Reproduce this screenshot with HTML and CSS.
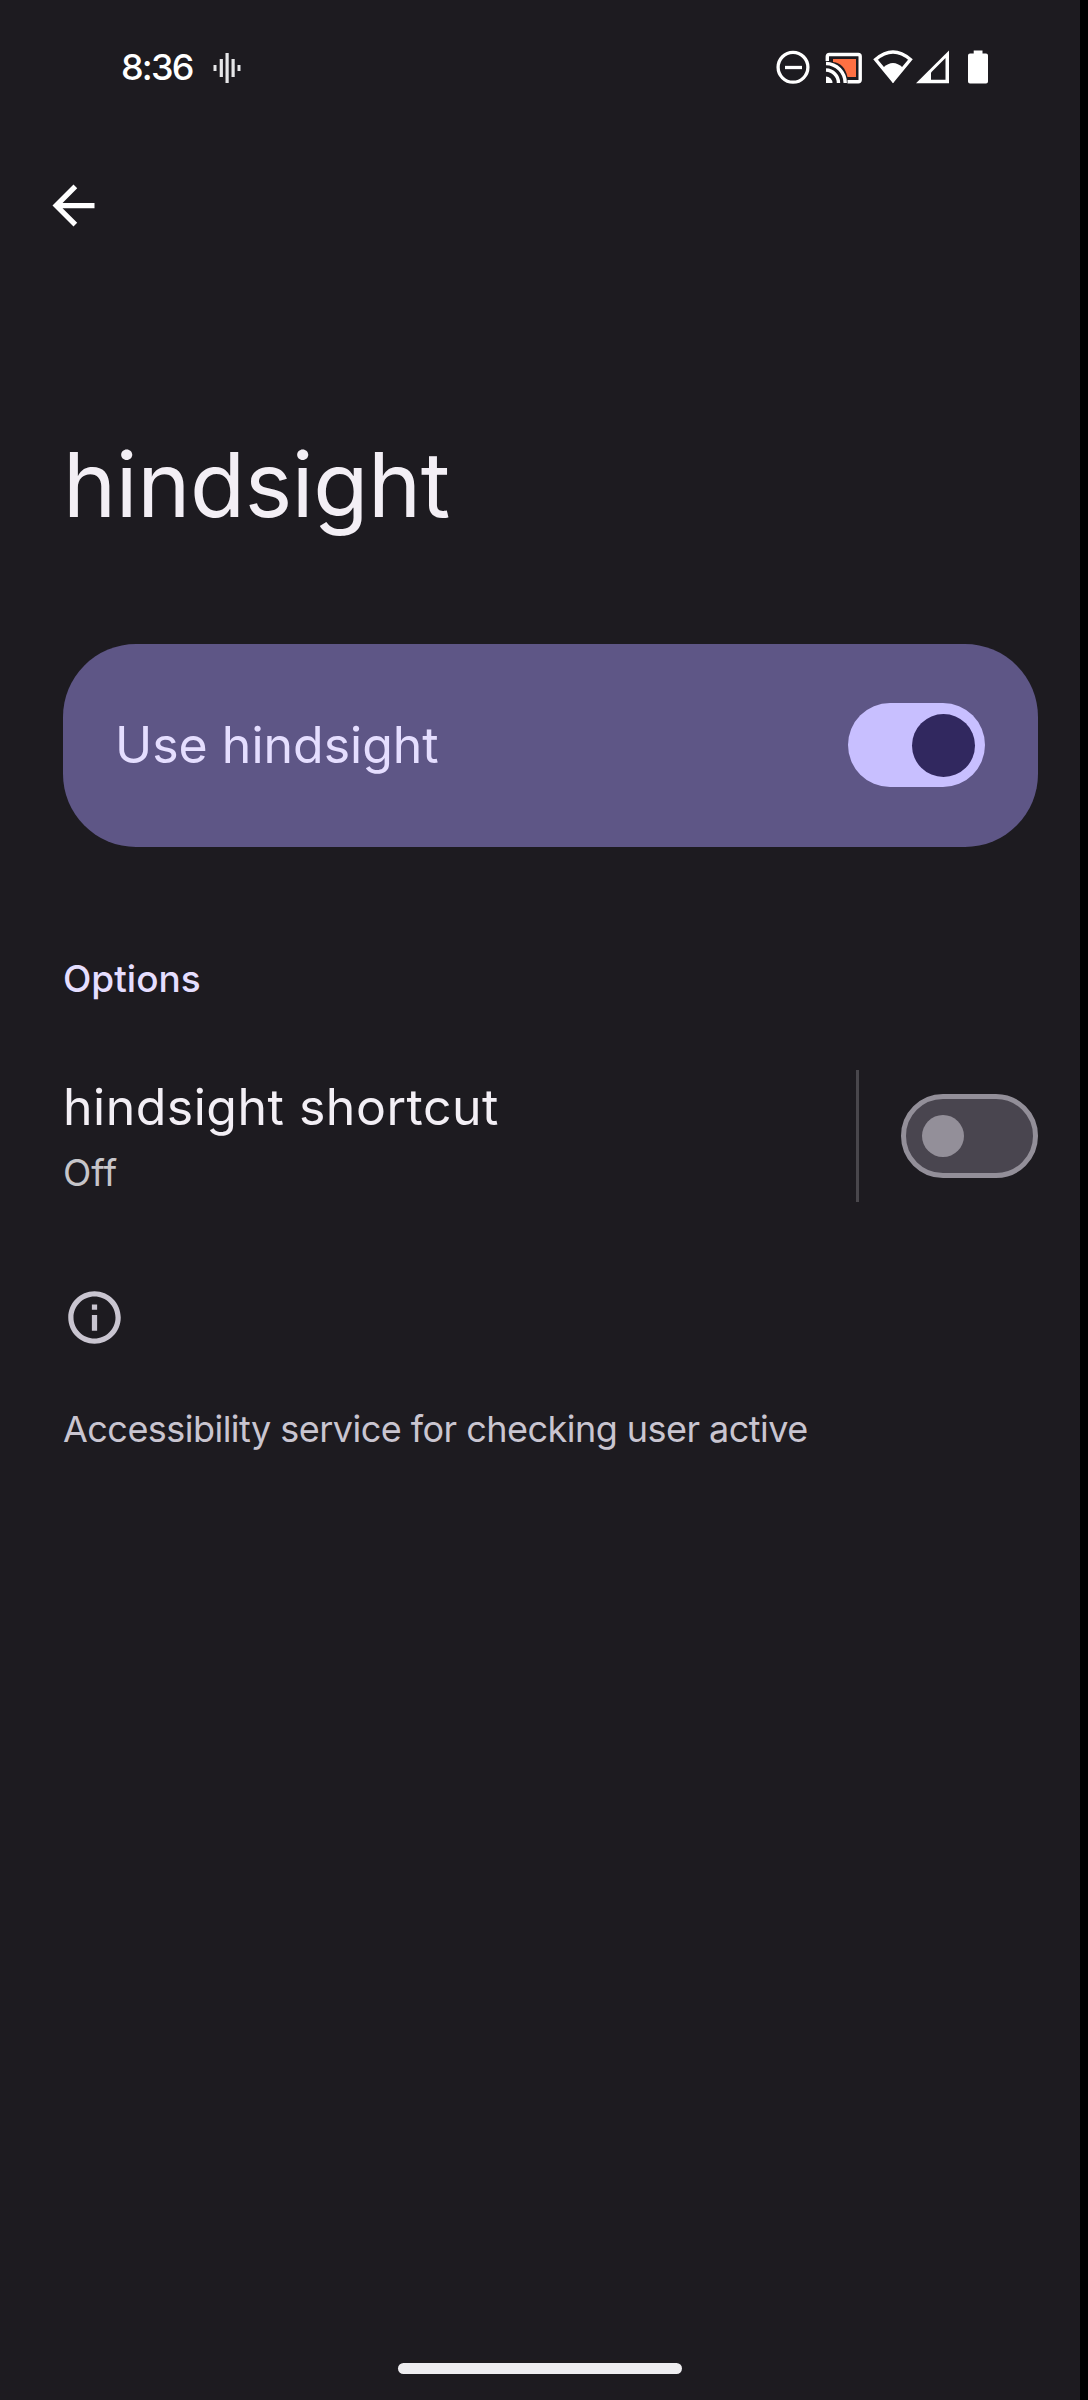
FILE: index.html
```html
<!DOCTYPE html>
<html lang="en">
<head>
<meta charset="utf-8">
<title>hindsight</title>
<link rel="stylesheet" href="styles.css">
</head>
<body>
<div class="screen">
  <header class="status">
    <div class="status-left">
      <span class="clock">8:36</span>
      <svg class="wave" width="28" height="34" viewBox="0 0 28 34" fill="#e6e6e8"><path d="M.5 15h3v6h-3zM6.700 9h3.200v18H6.700zM12.500 3h3.200v30h-3.200zM18.500 9h3.200v18h-3.200zM24.500 15h3v6h-3z"/></svg>
    </div>
    <div class="status-right">
      <svg width="34" height="34" viewBox="0 0 34 34" fill="none" stroke="#fff" stroke-width="3.300"><circle cx="17" cy="17.300" r="14.900"/><path d="M9 17.500h17"/></svg>
      <svg class="cast" width="38" height="34" viewBox="0 0 38 34" fill="none"><path d="M8 9h23v18h-8.500C20.500 18 16 13 8 12z" fill="#ff7043"/><path d="M2.300 11V6.500q0-2 2-2h28.900q2 0 2 2v23.200q0 2-2 2H22.500M1 13.500A19.500 19.500 0 0 1 20.200 33M1 20A13 13 0 0 1 13.500 33" stroke="#fff" stroke-width="3.400"/><path d="M1 26.500A6.500 6.500 0 0 1 7.500 33H1z" fill="#fff"/></svg>
      <svg class="wifi" width="40" height="34" viewBox="0 0 40 34"><path d="M2.600 9.500Q20-5.500 37.400 9.500L20 30.500z" fill="none" stroke="#fff" stroke-width="3.400"/><path d="M10.300 17.500Q20 8.500 29.700 17.500L20 33z" fill="#fff"/></svg>
      <svg class="signal" width="33" height="34" viewBox="0 0 33 34"><path d="M0 33.300L33 .5v32.800z" fill="#fff"/><path d="M15 22.500L29.500 8v21.800H15z" fill="#1d1b20"/></svg>
      <svg class="battery" width="20" height="34" viewBox="0 0 20 34" fill="#fff"><path d="M5.700.5h8.800v3h3.500q2 0 2 2v26q0 2-2 2H2q-2 0-2-2v-26q0-2 2-2h3.700z"/></svg>
    </div>
  </header>
  <nav class="toolbar">
    <svg width="63" height="63" viewBox="0 0 24 24" fill="#fff"><path d="M20 11H7.830l5.590-5.590L12 4l-8 8 8 8 1.410-1.410L7.830 13H20v-2z"/></svg>
  </nav>
  <main class="content">
    <h1 class="title">hindsight</h1>
    <section class="card">
      <span class="card-label">Use hindsight</span>
      <span class="switch on"><span class="thumb"></span></span>
    </section>
    <h2 class="category">Options</h2>
    <section class="row">
      <div class="row-text">
        <div class="row-title">hindsight shortcut</div>
        <div class="row-state">Off</div>
      </div>
      <div class="row-action">
        <span class="switch off"><span class="thumb"></span></span>
      </div>
    </section>
    <svg class="info" width="63" height="63" viewBox="0 0 24 24" fill="#c9c5d0"><path d="M11 7h2v2h-2zm0 4h2v6h-2zm1-9C6.480 2 2 6.480 2 12s4.480 10 10 10 10-4.480 10-10S17.520 2 12 2zm0 18c-4.410 0-8-3.590-8-8s3.590-8 8-8 8 3.590 8 8-3.590 8-8 8z"/></svg>
    <p class="summary">Accessibility service for checking user active</p>
  </main>
  <div class="home"></div>
</div>
</body>
</html>
```
FILE: styles.css
```css
* { box-sizing: border-box; }

body {
  margin: 0;
  background: #000;
  font-family: Inter, Roboto, sans-serif;
}

.screen {
  display: flex;
  flex-direction: column;
  width: 1080px;
  height: 2400px;
  background: #1d1b20;
}

svg { display: block; flex: none; }

.status {
  display: flex;
  align-items: center;
  justify-content: space-between;
  height: 134px;
  padding: 0 92px 0 121px;
}

.status-left, .status-right { display: flex; align-items: center; }

.clock {
  color: #fff;
  font-size: 36px;
  font-weight: 500;
  line-height: 44px;
  letter-spacing: -1.8px;
}

.wave { margin-left: 20px; }
.cast { margin-left: 15px; }
.wifi { margin-left: 10px; }
.signal { margin-left: 3px; }
.battery { margin-left: 19px; }

.toolbar {
  display: flex;
  align-items: center;
  height: 143px;
  padding-left: 42px;
}

.content {
  display: flex;
  flex-direction: column;
  padding: 154px 42px 0 63px;
}

.title {
  margin: 0;
  color: #f3eff5;
  font-size: 90px;
  font-weight: 400;
  line-height: 108px;
  letter-spacing: -0.4px;
}

.card {
  display: flex;
  align-items: center;
  justify-content: space-between;
  height: 203px;
  margin-top: 105px;
  padding: 0 53px 1px 52px;
  border-radius: 73px;
  background: #5e5686;
}

.card-label {
  color: #e5deff;
  font-size: 50px;
  line-height: 60px;
}

.switch {
  display: flex;
  align-items: center;
  width: 137px;
  height: 84px;
  border-radius: 42px;
}

.on {
  justify-content: flex-end;
  padding-right: 10px;
  background: #c8bfff;
}

.on .thumb {
  width: 63px;
  height: 63px;
  border-radius: 50%;
  background: #31285f;
}

.off {
  padding-left: 16px;
  border: 5px solid #938f99;
  background: #49454f;
}

.off .thumb {
  width: 42px;
  height: 42px;
  border-radius: 50%;
  background: #938f99;
}

.category {
  margin: 110px 0 0;
  color: #e5deff;
  font-size: 37px;
  font-weight: 500;
  line-height: 44px;
}

.row {
  display: flex;
  align-items: center;
  justify-content: space-between;
  height: 132px;
  margin-top: 69px;
}

.row-title {
  color: #f3eff5;
  font-size: 50px;
  line-height: 60px;
  letter-spacing: 0.5px;
}

.row-state {
  margin-top: 14px;
  color: #c6c5c9;
  font-size: 37px;
  line-height: 44px;
}

.row-action {
  display: flex;
  align-items: center;
  height: 132px;
  padding-left: 42px;
  border-left: 3px solid #49474c;
}

.info { margin-top: 84px; }

.summary {
  margin: 58px 0 0;
  color: #c9c5d0;
  font-size: 36px;
  line-height: 44px;
  letter-spacing: -0.53px;
  white-space: nowrap;
}

.home {
  width: 284px;
  height: 11px;
  margin: auto auto 26px;
  border-radius: 6px;
  background: #eeedf0;
}
```
